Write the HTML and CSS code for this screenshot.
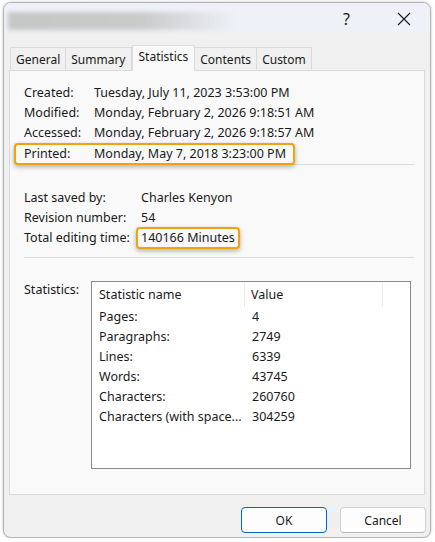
FILE: index.html
```html
<!DOCTYPE html>
<html>
	<head>
		<meta charset="utf-8">
		<title>Properties</title>
		<link rel="stylesheet" href="styles.css">
	</head>
	<body>
		<div class=dialog>
			<div class=titlebar>
				<div class=blurTitle></div>
				<span class=help>?</span>
				<svg class=close width="14" height="14" viewBox="0 0 14 14"><path d="M1 1L13 13M13 1L1 13" stroke="#1a1a1a" stroke-width="1.1" fill="none"/></svg>
			</div>
			<div class=tabs>
				<span class=tab>General</span>
				<span class=tab>Summary</span>
				<span class="tab selected">Statistics</span>
				<span class=tab>Contents</span>
				<span class=tab>Custom</span>
			</div>
			<div class=panel>
				<div class="rows dates">
					<div class=row><span class=label>Created:</span><span>Tuesday, July 11, 2023 3:53:00 PM</span></div>
					<div class=row><span class=label>Modified:</span><span>Monday, February 2, 2026 9:18:51 AM</span></div>
					<div class=row><span class=label>Accessed:</span><span>Monday, February 2, 2026 9:18:57 AM</span></div>
					<div class="row marked printed"><span class=label>Printed:</span><span>Monday, May 7, 2018 3:23:00 PM</span></div>
				</div>
				<div class=separator></div>
				<div class="rows info">
					<div class=row><span class=label>Last saved by:</span><span>Charles Kenyon</span></div>
					<div class=row><span class=label>Revision number:</span><span>54</span></div>
					<div class=row><span class=label>Total editing time:</span><span class="marked editTime">140166 Minutes</span></div>
				</div>
				<div class=separator></div>
				<div class=stats>
					<span class=statsLabel>Statistics:</span>
					<div class=list>
						<div class=header>
							<span class=colName>Statistic name</span>
							<span class=colValue>Value</span>
							<span class=colRest></span>
						</div>
						<div class=item><span class=colName>Pages:</span><span>4</span></div>
						<div class=item><span class=colName>Paragraphs:</span><span>2749</span></div>
						<div class=item><span class=colName>Lines:</span><span>6339</span></div>
						<div class=item><span class=colName>Words:</span><span>43745</span></div>
						<div class=item><span class=colName>Characters:</span><span>260760</span></div>
						<div class=item><span class=colName>Characters (with space...</span><span>304259</span></div>
					</div>
				</div>
			</div>
			<div class=buttons>
				<button class="default">OK</button>
				<button>Cancel</button>
			</div>
		</div>
	</body>
</html>
```
FILE: styles.css
```css
body {
	margin: 0;
	background-color: #ffffff;
	font-family: "Noto Sans", "Open Sans", sans-serif;
	font-size: 12px;
	color: #1a1a1a;
}

.dialog {
	margin: 2px 4px 0 3px;
	height: 536px;
	box-sizing: border-box;
	border: 1px solid #b4b4b4;
	border-radius: 8px;
	background-color: #f0f0f0;
	overflow: hidden;
	box-shadow: 0 0 3px rgba(0, 0, 0, 0.25);
}

.titlebar {
	height: 28px;
	display: flex;
	align-items: center;
	background-color: #eef1f7;
}

.blurTitle {
	margin-left: 4px;
	width: 228px;
	height: 18px;
	margin-top: 7px;
	background: linear-gradient(to right, #c6c6c6 0%, #cbcbcb 60%, rgba(220, 220, 220, 0) 100%);
	filter: blur(2px);
}

.help {
	margin-left: auto;
	font-size: 16px;
	margin-right: 47px;
	margin-top: 4px;
}

.close {
	margin-right: 19px;
	margin-top: 4px;
}

.tabs {
	display: flex;
	align-items: flex-end;
	margin: 14px 0 0 6px;
	height: 25px;
}

.tab {
	height: 23px;
	line-height: 23px;
	padding: 0 5px;
	box-sizing: border-box;
	border: 1px solid #dadada;
	border-bottom: none;
	border-left: none;
	color: #1a1a1a;
}

.tab:first-child {
	border-left: 1px solid #dadada;
}

.tab.selected {
	height: 26px;
	line-height: 22px;
	background-color: #f9f9f9;
	border-left: 1px solid #dadada;
	margin-bottom: -1px;
	position: relative;
	padding: 0 6px;
}

.panel {
	margin: 0 5px;
	height: 425px;
	box-sizing: border-box;
	border: 1px solid #dadada;
	background-color: #f9f9f9;
	padding: 12px 0 0 14px;
	font-size: 12.5px;
}

.row {
	display: flex;
	height: 20px;
	line-height: 20px;
	white-space: nowrap;
}

.dates .label {
	width: 70px;
}

.info .label {
	width: 117px;
}

.marked {
	border: 2px solid #f2a20c;
	border-radius: 4px;
	box-shadow: 0 2px 5px rgba(0, 0, 0, 0.3);
	background-color: #f9f9f9;
	position: relative;
	box-sizing: border-box;
}

.printed {
	display: inline-flex;
	margin-left: -10px;
	padding: 0 7px 0 8px;
	height: 22px;
	line-height: 18px;
}

.separator {
	height: 1px;
	margin: 0 10px 0 0;
	background-color: #dcdcdc;
}

.dates {
	margin-bottom: -1px;
}

.info {
	padding-top: 23px;
	margin-bottom: 9px;
}

.editTime {
	margin-left: -5px;
	padding: 0 3px;
	line-height: 18px;
	height: 22px;
	margin-top: -1px;
}

.stats {
	display: flex;
	margin-top: 23px;
}

.statsLabel {
	width: 67px;
	line-height: 20px;
	margin-top: -1px;
}

.list {
	width: 320px;
	height: 188px;
	box-sizing: border-box;
	border: 1px solid #8a8a8a;
	background-color: #ffffff;
}

.header {
	display: flex;
	height: 25px;
	line-height: 25px;
}

.header span {
	border-right: 1px solid #ececec;
	box-sizing: border-box;
}

.colName {
	width: 153px;
	padding-left: 7px;
	box-sizing: border-box;
	white-space: nowrap;
	overflow: hidden;
}

.colValue {
	width: 138px;
	padding-left: 6px;
}

.header .colRest {
	border-right: none;
}

.item {
	display: flex;
	height: 20px;
	line-height: 20px;
}

.item span:last-child {
	padding-left: 7px;
}

.buttons {
	display: flex;
	justify-content: flex-end;
	gap: 13px;
	padding: 12px 4px 0 0;
}

button {
	width: 86px;
	height: 26px;
	font-family: "Noto Sans", "Open Sans", sans-serif;
	font-size: 12px;
	color: #1a1a1a;
	background-color: #fdfdfd;
	border: 1px solid #d0d0d0;
	border-bottom-color: #b8b8b8;
	border-radius: 4px;
}

button.default {
	border: 1px solid #0067c0;
}
```
